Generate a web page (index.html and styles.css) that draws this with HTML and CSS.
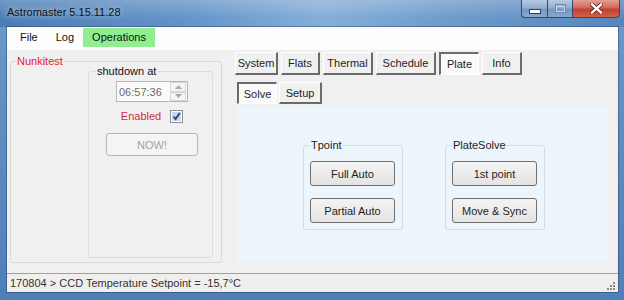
FILE: index.html
```html
<!DOCTYPE html>
<html>
<head>
    <title>Astromaster</title>
    <link rel="stylesheet" href="styles.css">
</head>
<body>
    <div class="window">
        <div class="titlebar">
            <span class="title">Astromaster 5.15.11.28</span>
            <div class="caption-buttons">
                <span class="cap cap-min">
                    <svg width="12" height="6" viewBox="0 0 12 6"><rect x="0.5" y="0.5" width="11" height="4" fill="#fff" stroke="#2c3e5a"/></svg>
                </span>
                <span class="cap cap-max">
                    <svg width="11" height="9" viewBox="0 0 11 9"><rect x="0.5" y="0.5" width="10" height="8" fill="none" stroke="#6f8aae"/><rect x="1.5" y="2.5" width="8" height="5" fill="none" stroke="#c6d5e6"/></svg>
                </span>
                <span class="cap cap-close">
                    <svg width="13" height="11" viewBox="0 0 13 11"><path d="M2 1.5 L11 9.5 M11 1.5 L2 9.5" stroke="#5a1a14" stroke-width="4" stroke-linecap="square"/><path d="M2 1.5 L11 9.5 M11 1.5 L2 9.5" stroke="#fff" stroke-width="2.4" stroke-linecap="square"/></svg>
                </span>
            </div>
        </div>

        <div class="client">
            <div class="menubar">
                <span class="menu-item">File</span>
                <span class="menu-item">Log</span>
                <span class="menu-item menu-active">Operations</span>
            </div>

            <div class="main">
                <fieldset class="group group-unit">
                    <legend class="unit-name">Nunkitest</legend>
                    <div class="unit-body">
                        <fieldset class="group group-shutdown">
                            <legend>shutdown at</legend>
                            <div class="shutdown-body">
                                <div class="time-picker">
                                    <span class="time-value">06:57:36</span>
                                    <div class="spin">
                                        <span class="spin-btn">
                                            <svg width="7" height="4" viewBox="0 0 7 4"><path d="M0 4 L3.5 0 L7 4 Z" fill="#a8a8a8"/></svg>
                                        </span>
                                        <span class="spin-btn">
                                            <svg width="7" height="4" viewBox="0 0 7 4"><path d="M0 0 L3.5 4 L7 0 Z" fill="#a8a8a8"/></svg>
                                        </span>
                                    </div>
                                </div>
                                <div class="enabled-row">
                                    <span class="enabled-label">Enabled</span>
                                    <span class="checkbox">
                                        <svg width="13" height="13" viewBox="0 0 13 13"><rect x="0.5" y="0.5" width="12" height="12" fill="#fff" stroke="#8e8f8f"/><rect x="2" y="2" width="9" height="9" fill="#c9d6ea"/><path d="M3.5 6.5 L5.6 9 L9.8 3" fill="none" stroke="#2a3d78" stroke-width="1.8"/></svg>
                                    </span>
                                </div>
                                <button class="btn btn-now" disabled>NOW!</button>
                            </div>
                        </fieldset>
                    </div>
                </fieldset>

                <div class="tabs-area">
                    <div class="tab-row">
                        <span class="tab tab-system">System</span>
                        <span class="tab tab-flats">Flats</span>
                        <span class="tab tab-thermal">Thermal</span>
                        <span class="tab tab-schedule">Schedule</span>
                        <span class="tab tab-plate tab-selected">Plate</span>
                        <span class="tab tab-info">Info</span>
                    </div>
                    <div class="tab-row sub-row">
                        <span class="tab tab-solve tab-selected">Solve</span>
                        <span class="tab tab-setup">Setup</span>
                    </div>
                    <div class="tab-panel">
                        <fieldset class="group group-light">
                            <legend>Tpoint</legend>
                            <button class="btn btn-action">Full Auto</button>
                            <button class="btn btn-action">Partial Auto</button>
                        </fieldset>
                        <fieldset class="group group-light">
                            <legend>PlateSolve</legend>
                            <button class="btn btn-action">1st point</button>
                            <button class="btn btn-action">Move &amp; Sync</button>
                        </fieldset>
                    </div>
                </div>
            </div>

            <div class="statusbar">
                <span class="status-text">170804 &gt; CCD Temperature Setpoint = -15,7°C</span>
                <span class="grip">
                    <svg width="10" height="10" viewBox="0 0 10 10" fill="#8a8a8a"><rect x="7" y="1" width="2" height="2"/><rect x="4" y="4" width="2" height="2"/><rect x="7" y="4" width="2" height="2"/><rect x="1" y="7" width="2" height="2"/><rect x="4" y="7" width="2" height="2"/><rect x="7" y="7" width="2" height="2"/></svg>
                </span>
            </div>
        </div>
    </div>
</body>
</html>
```

FILE: styles.css
```css
body {
    margin: 0;
    font-family: "Liberation Sans", Arial, sans-serif;
    font-size: 11px;
    color: #1e1e1e;
}
.window {
    width: 624px;
    height: 300px;
    display: flex;
    flex-direction: column;
    background: linear-gradient(180deg, #6c9acb 0%, #5f8ec3 40%, #4e7fb7 100%);
    overflow: hidden;
}
.titlebar {
    height: 27px;
    flex: none;
    display: flex;
    align-items: flex-start;
    padding-left: 7px;
    background:
        linear-gradient(180deg, rgba(255, 255, 255, 0.22), rgba(255, 255, 255, 0) 70%),
        linear-gradient(90deg, #4b7db5 0%, #6494c8 30%, #86aed9 52%, #6e9bcb 72%, #5886bd 100%);
}
.title {
    margin-top: 6px;
    line-height: 13px;
    color: #111;
    text-shadow: 0 0 6px rgba(255, 255, 255, 0.8);
}
.caption-buttons {
    margin-left: auto;
    margin-right: 4px;
    display: flex;
    height: 18px;
}
.cap {
    display: flex;
    align-items: center;
    justify-content: center;
    height: 17px;
    border: 1px solid #34496a;
    border-top: none;
    box-sizing: content-box;
}
.cap-min {
    width: 25px;
    border-radius: 0 0 0 4px;
    border-right: none;
    background: linear-gradient(180deg, #b6cbe2 0%, #92afd2 45%, #7896c0 55%, #89a8cf 100%);
}
.cap-min svg {
    margin-top: 6px;
}
.cap-max {
    width: 24px;
    border-right: none;
    background: linear-gradient(180deg, #b6cbe2 0%, #92afd2 45%, #7896c0 55%, #89a8cf 100%);
}
.cap-close {
    width: 46px;
    border-radius: 0 0 4px 0;
    background: linear-gradient(180deg, #e5a094 0%, #d4685a 45%, #c2402f 55%, #d1604b 100%);
}
.client {
    flex: 1;
    margin: 0 6px 8px 7px;
    display: flex;
    flex-direction: column;
    background: #f0f0f0;
    outline: 1px solid rgba(40, 60, 90, 0.45);
}
.menubar {
    height: 23px;
    flex: none;
    box-sizing: border-box;
    padding: 1px 0 0 4px;
    display: flex;
    background: #fdfdfd;
}
.menu-item {
    padding: 0 9px;
    height: 19px;
    line-height: 19px;
    color: #111;
}
.menu-active {
    background: #90ee90;
}
.main {
    height: 223px;
    flex: none;
    display: flex;
    padding-left: 3px;
    overflow: hidden;
}
.group {
    margin: 0;
    padding: 0;
    border: 1px solid #d9d9d9;
    border-radius: 3px;
    box-sizing: border-box;
}
.group legend {
    padding: 0 1px;
    line-height: 12px;
}
.group-unit {
    margin-top: 5px;
    width: 212px;
    height: 208px;
}
.unit-name {
    margin-left: 5px;
    color: #e8201c;
}
.unit-body {
    padding: 0 8px 0 77px;
}
.group-shutdown {
    margin-top: -2px;
    width: 125px;
    height: 193px;
    border-color: #dcdcdc;
}
.group-shutdown legend {
    margin-left: 7px;
    color: #111;
}
.shutdown-body {
    display: flex;
    flex-direction: column;
    align-items: center;
    padding-left: 3px;
}
.time-picker {
    margin-top: 4px;
    width: 72px;
    height: 21px;
    box-sizing: border-box;
    border: 1px solid #b7b7b7;
    background: #fafafa;
    display: flex;
    align-items: center;
}
.time-value {
    padding-left: 2px;
    color: #6d6d6d;
    flex: 1;
}
.spin {
    width: 16px;
    height: 19px;
    display: flex;
    flex-direction: column;
    margin-right: 1px;
}
.spin-btn {
    flex: 1;
    display: flex;
    align-items: center;
    justify-content: center;
    border: 1px solid #d5d5d5;
    background: #f4f4f4;
}
.enabled-row {
    margin-top: 8px;
    height: 13px;
    display: flex;
    align-items: center;
    gap: 9px;
}
.enabled-label {
    color: #d42a3a;
    line-height: 13px;
}
.checkbox {
    display: flex;
}
.btn {
    font-family: inherit;
    font-size: 11px;
    padding: 0;
    box-sizing: border-box;
    border-radius: 3px;
}
.btn-now {
    margin-top: 10px;
    width: 92px;
    height: 23px;
    border: 1px solid #b2b5b8;
    background: #f4f4f4;
    color: #a3a3a3;
}
.tabs-area {
    margin-left: 13px;
    width: 373px;
    display: flex;
    flex-direction: column;
}
.tab-row {
    margin-top: 2px;
    height: 23px;
    display: flex;
    gap: 3px;
}
.sub-row {
    margin-top: 7px;
    height: 22px;
    gap: 2px;
    padding-left: 2px;
}
.tab {
    box-sizing: border-box;
    height: 100%;
    display: flex;
    align-items: center;
    justify-content: center;
    background: #f0f0f0;
    border-style: solid;
    border-width: 1px 2px 2px 1px;
    border-color: #ffffff #6b6b6b #6b6b6b #ffffff;
    color: #1e1e1e;
}
.tab-selected {
    background: #fafafa;
    border-width: 2px 1px 1px 2px;
    border-color: #6b6b6b #ffffff #ffffff #6b6b6b;
}
.tab-system { width: 43px; }
.tab-flats { width: 39px; }
.tab-thermal { width: 50px; }
.tab-schedule { width: 60px; }
.tab-plate { width: 40px; }
.tab-info { width: 40px; }
.tab-solve { width: 40px; }
.tab-setup { width: 43px; }
.tab-panel {
    margin: 3px 0 0 2px;
    width: 371px;
    height: 154px;
    box-sizing: border-box;
    padding: 32px 0 0 3px;
    background: #edf5fc;
    display: flex;
    justify-content: center;
    align-items: flex-start;
    gap: 42px;
}
.group-light {
    width: 100px;
    height: 91px;
    padding: 0 7px 0 6px;
    border-color: #d3dbe3;
    display: flex;
    flex-direction: column;
}
.group-light legend {
    margin-left: 0;
    color: #222;
}
.btn-action {
    margin-top: 10px;
    width: 85px;
    height: 25px;
    border: 1px solid #707070;
    background: linear-gradient(180deg, #f3f3f3 0%, #ececec 50%, #e3e3e3 100%);
    color: #1e1e1e;
}
.btn-action + .btn-action {
    margin-top: 12px;
}
.statusbar {
    height: 18px;
    flex: none;
    border-top: 1px solid #a0a0a0;
    background: #f1efee;
    display: flex;
    align-items: center;
    padding-left: 3px;
}
.status-text {
    flex: 1;
    color: #333;
}
.grip {
    display: flex;
    align-self: flex-end;
    margin: 0 2px 1px 0;
}
```
